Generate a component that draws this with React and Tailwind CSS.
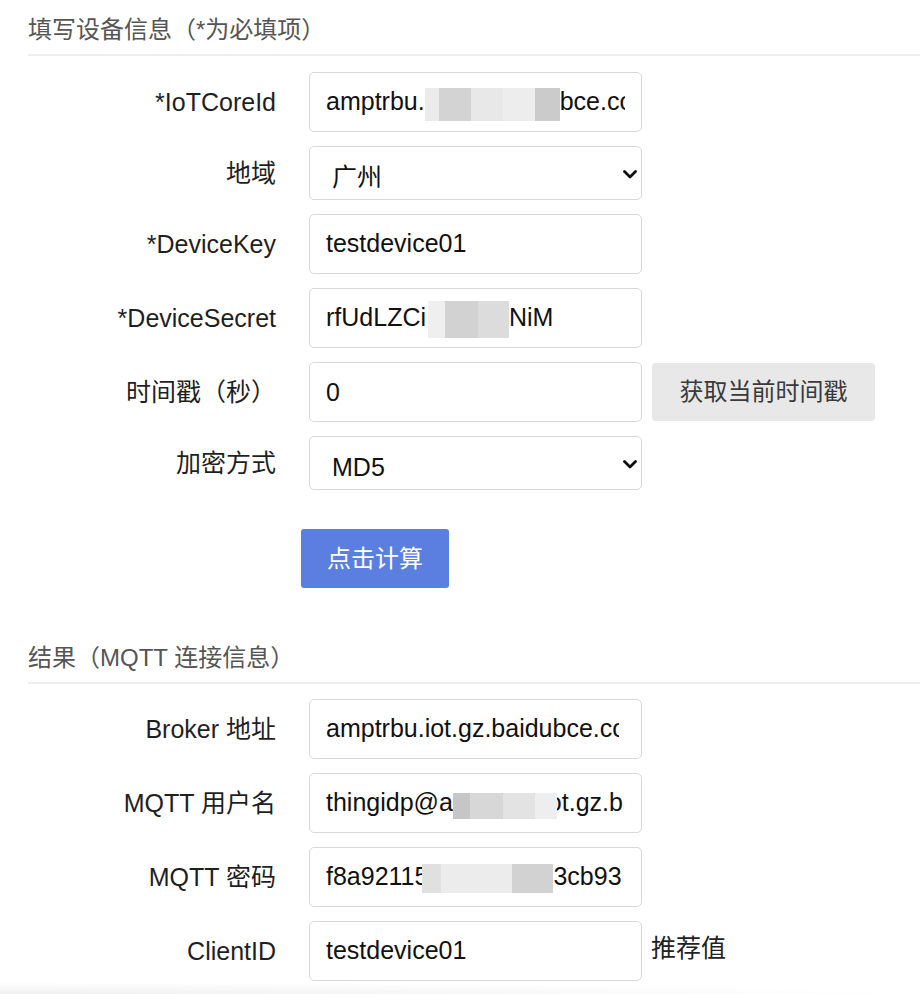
import { useState } from 'react'

// blurred-out parts of the values, drawn as little gray blocks
function Mosaic({ cols, h, className = '' }) {
  return (
    <span className={`flex shrink-0 z-10 ${className}`} style={{ height: h }}>
      {cols.map(([w, c], i) => (
        <span key={i} className="block h-full" style={{ width: w, background: c }} />
      ))}
    </span>
  )
}

function Label({ children }) {
  return (
    <div className="w-[248px] mr-[33px] shrink-0 text-right text-[25px] leading-[30px] text-[#1f1f1f] whitespace-nowrap">
      {children}
    </div>
  )
}

function Field({ children, pr = 'pr-[14px]' }) {
  return (
    <div className={`w-[333px] h-[60px] shrink-0 border border-[#d9d9d9] rounded-[5px] bg-white pl-[16px] ${pr} flex items-center whitespace-nowrap text-[25px] text-[#111]`}>
      <div className="flex items-center overflow-hidden w-full">{children}</div>
    </div>
  )
}

function Select({ value, options, onChange }) {
  return (
    <div className="relative w-[333px] h-[54px] shrink-0">
      <select
        value={value}
        onChange={e => onChange(e.target.value)}
        className="appearance-none w-full h-full border border-[#d9d9d9] rounded-[5px] bg-white pl-[22px] pt-[9px] text-[25px] text-[#111] outline-none"
      >
        {options.map(o => <option key={o} value={o}>{o}</option>)}
      </select>
      <svg
        className="absolute right-[5px] top-[24px] pointer-events-none"
        width="14" height="9" viewBox="0 0 14 9" fill="none"
      >
        <path d="M1.5 1.5 L7 7 L12.5 1.5" stroke="#111" strokeWidth="2.8" strokeLinecap="round" strokeLinejoin="round" />
      </svg>
    </div>
  )
}

function Row({ label, children }) {
  return (
    <div className="flex items-center">
      <Label>{label}</Label>
      {children}
    </div>
  )
}

function SectionTitle({ children }) {
  return (
    <div className="pt-[15px] pb-[9px] border-b-2 border-[#eeeeee]">
      <h2 className="text-[24px] leading-[30px] text-[#555] font-normal">{children}</h2>
    </div>
  )
}

export default function App() {
  const [region, setRegion] = useState('广州')
  const [algo, setAlgo] = useState('MD5')
  const [ts, setTs] = useState('0')

  return (
    <div
      className="relative w-[920px] h-[994px] bg-white overflow-hidden"
      style={{ fontFamily: '"Liberation Sans", "Noto Sans CJK SC", sans-serif' }}
    >
      <section className="pl-[28px]">
        <SectionTitle>填写设备信息（*为必填项）</SectionTitle>
        <div className="mt-[16px] flex flex-col gap-[14px]">
          <Row label="*IoTCoreId">
            <Field pr="pr-[16px]">
              <span>amptrbu.</span>
              <Mosaic
                h={33}
                className="mt-[5px]"
                cols={[[14, '#ebebeb'], [32, '#d3d3d3'], [32, '#e8e8e8'], [32, '#ededed'], [25, '#cbcbcb']]}
              />
              <span>bce.com</span>
            </Field>
          </Row>
          <Row label="地域">
            <Select value={region} options={['广州', '北京', '上海']} onChange={setRegion} />
          </Row>
          <Row label="*DeviceKey">
            <Field>testdevice01</Field>
          </Row>
          <Row label="*DeviceSecret">
            <Field>
              <span>rfUdLZCi</span>
              <Mosaic
                h={37}
                className="mt-[2px] ml-[2px]"
                cols={[[17, '#efefef'], [33, '#d2d2d2'], [31, '#dcdcdc']]}
              />
              <span>NiM</span>
            </Field>
          </Row>
          <Row label="时间戳（秒）">
            <input
              value={ts}
              onChange={e => setTs(e.target.value)}
              className="w-[333px] h-[60px] shrink-0 border border-[#d9d9d9] rounded-[5px] bg-white pl-[16px] pr-[14px] text-[25px] text-[#111] outline-none"
            />
            <button
              onClick={() => setTs(String(Math.floor(Date.now() / 1000)))}
              className="ml-[10px] w-[223px] h-[58px] rounded-[4px] bg-[#e8e8e8] text-[24px] text-[#3a3a3a]"
            >
              获取当前时间戳
            </button>
          </Row>
          <Row label="加密方式">
            <Select value={algo} options={['MD5', 'SHA256']} onChange={setAlgo} />
          </Row>
        </div>
        <button className="mt-[39px] ml-[273px] w-[148px] h-[59px] rounded-[3px] bg-[#5a7fe0] text-white text-[24px]">
          点击计算
        </button>
      </section>

      <section className="pl-[28px] mt-[40px]">
        <SectionTitle>结果（MQTT 连接信息）</SectionTitle>
        <div className="mt-[15px] flex flex-col gap-[14px]">
          <Row label="Broker 地址">
            <Field pr="pr-[22px]">amptrbu.iot.gz.baidubce.com</Field>
          </Row>
          <Row label="MQTT 用户名">
            <Field pr="pr-[17px]">
              <span>thingidp@a</span>
              <Mosaic
                h={26}
                className="mt-[6px]"
                cols={[[17, '#c6c6c6'], [33, '#d7d7d7'], [32, '#e3e3e3'], [22, '#eeeeee']]}
              />
              <span className="-ml-[9px]">ot.gz.baidubce.com</span>
            </Field>
          </Row>
          <Row label="MQTT 密码">
            <Field>
              <span>f8a92115</span>
              <Mosaic
                h={29}
                className="mt-[2px] -ml-[6px]"
                cols={[[19, '#e0e0e0'], [71, '#ececec'], [41, '#d2d2d2']]}
              />
              <span>3cb93</span>
            </Field>
          </Row>
          <Row label="ClientID">
            <Field>testdevice01</Field>
            <span className="ml-[9px] -mt-[4px] text-[25px] text-[#222]">推荐值</span>
          </Row>
        </div>
      </section>

      <div className="absolute left-0 right-0 bottom-0 h-[12px] pointer-events-none bg-[radial-gradient(ellipse_at_left_bottom,rgba(0,0,0,0.06),rgba(0,0,0,0)_70%)]" />
    </div>
  )
}
